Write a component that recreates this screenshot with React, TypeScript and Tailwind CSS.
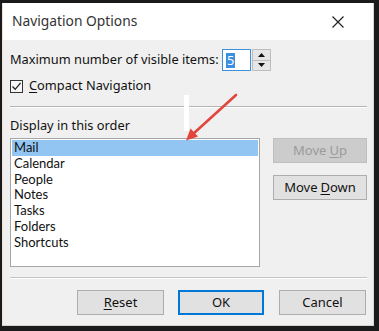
import * as React from "react";
import { clsx } from "clsx";

const font = { fontFamily: '"Noto Sans", "Open Sans", sans-serif' };
const listFont = { fontFamily: 'Lato, "Noto Sans", sans-serif' };

// 按钮
interface DlgButtonProps {
  children: React.ReactNode;
  disabled?: boolean;
  primary?: boolean;
  className?: string;
}

const DlgButton: React.FC<DlgButtonProps> = ({ children, disabled, primary, className }) => (
  <div
    className={clsx(
      "flex h-[25px] items-center justify-center text-[13px]",
      disabled
        ? "border border-[#bfbfbf] bg-[#cccccc] text-[#9a9a9a]"
        : primary
          ? "border-2 border-[#0078d7] bg-[#e1e1e1] text-[#111]"
          : "border border-[#adadad] bg-[#e1e1e1] text-[#111]",
      className,
    )}
  >
    {children}
  </div>
);

const items = ["Mail", "Calendar", "People", "Notes", "Tasks", "Folders", "Shortcuts"];

export default function App() {
  return (
    <div className="relative h-[331px] w-[379px] overflow-hidden bg-[#1b1b1b] pl-[2px] pt-[3px]" style={font}>
      <div className="flex h-[323px] w-[372px] flex-col border-x border-b border-l-[#efe2d4] border-r-[#d6d6d6] border-b-[#d8d0c8] bg-[#f0f0f0]">
        {/* 标题栏 */}
        <div className="flex h-[37px] shrink-0 items-center justify-between bg-white pl-[9px] pr-[29px]">
          <span className="text-[13.8px] text-[#333]">Navigation Options</span>
          <svg width="12" height="12" viewBox="0 0 12 12">
            <path d="M0.5 0.5 L11.5 11.5 M11.5 0.5 L0.5 11.5" stroke="#222" strokeWidth="1.2" />
          </svg>
        </div>

        <div className="flex flex-1 flex-col pl-[7px] pr-[6px] text-[12.8px] text-[#111]">
          {/* 可见项数量 */}
          <div className="mt-[9px] flex h-[22px] items-center">
            <span className="w-[212px]">Maximum number of visible items:</span>
            <div className="flex h-[22px] w-[29px] items-center border border-[#3c8fd8] bg-white pl-[3px]">
              <span className="bg-[#3b8fe0] px-px leading-[15px] text-white">5</span>
            </div>
            <div className="ml-[1px] flex h-[22px] w-[19px] flex-col border border-[#bdbdbd] bg-[#e6e6e6]">
              <div className="flex flex-1 items-center justify-center border-b border-[#bdbdbd]">
                <svg width="7" height="4" viewBox="0 0 7 4"><path d="M3.5 0 L7 4 L0 4Z" fill="#111" /></svg>
              </div>
              <div className="flex flex-1 items-center justify-center">
                <svg width="7" height="4" viewBox="0 0 7 4"><path d="M0 0 L7 0 L3.5 4Z" fill="#111" /></svg>
              </div>
            </div>
          </div>

          {/* 紧凑导航 */}
          <div className="mt-[6px] flex h-[18px] items-center">
            <div className="flex h-[13px] w-[13px] items-center justify-center border border-[#333] bg-[#f7f7f7]">
              <svg width="11" height="11" viewBox="0 0 11 11">
                <path d="M1.5 5.5 L4.2 8.3 L9.6 1.8" fill="none" stroke="#222" strokeWidth="1.3" />
              </svg>
            </div>
            <span className="ml-[6px]">
              <span className="underline underline-offset-2">C</span>ompact Navigation
            </span>
          </div>

          <div className="mt-[11px] h-px bg-[#b4b4b4] shadow-[0_1px_0_#ffffff]" />

          <div className="mt-[10px] h-[17px] leading-[17px]">Display in this order</div>

          <div className="mt-[4px] flex">
            {/* 列表 */}
            <div className="h-[129px] w-[250px] border border-[#a6a6a6] bg-white p-px" style={listFont}>
              {items.map((item, i) => (
                <div
                  key={item}
                  className={clsx(
                    "h-[15.8px] pl-[2px] text-[13px] leading-[15.8px]",
                    i === 0 && "bg-[#93c5f2]",
                  )}
                >
                  {item}
                </div>
              ))}
            </div>
            <div className="ml-[13px] flex flex-1 flex-col gap-[12px]">
              <DlgButton disabled>
                Move <span className="ml-[3px] underline underline-offset-2">U</span>p
              </DlgButton>
              <DlgButton>
                Move <span className="ml-[3px] underline underline-offset-2">D</span>own
              </DlgButton>
            </div>
          </div>

          <div className="mt-[10px] h-px bg-[#c4c4c4] shadow-[0_1px_0_#ffffff]" />

          {/* 底部按钮 */}
          <div className="mt-[12px] flex">
            <DlgButton className="ml-[67px] w-[87px]">
              <span className="underline underline-offset-2">R</span>eset
            </DlgButton>
            <DlgButton primary className="ml-[14px] w-[86px]">
              OK
            </DlgButton>
            <DlgButton className="ml-[15px] w-[87px]">Cancel</DlgButton>
          </div>
        </div>
      </div>

      {/* 标注 */}
      <div className="absolute left-[184px] top-[95px] h-[36px] w-[5px] bg-white" />
      <svg className="absolute left-0 top-0" width="379" height="331" viewBox="0 0 379 331">
        <path d="M236 95 L193 134" stroke="#e2453c" strokeWidth="2.6" strokeLinecap="round" />
        <path d="M186 140.5 L190.5 128.5 L198 136.5 Z" fill="#e2453c" />
      </svg>
    </div>
  );
}
